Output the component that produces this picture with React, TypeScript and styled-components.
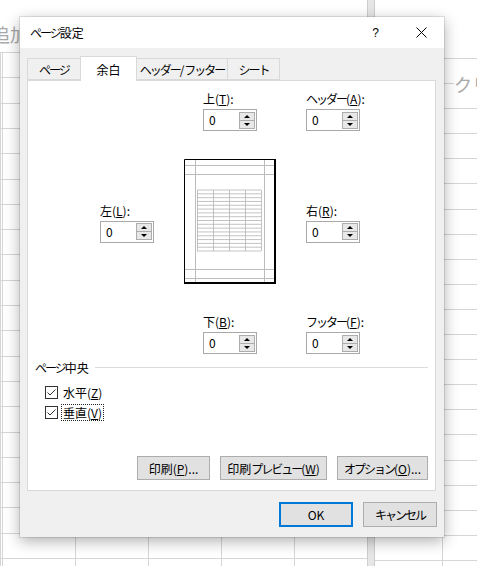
import React from "react";
import styled, { createGlobalStyle } from "styled-components";

const UI = `"Noto Sans CJK JP", "Noto Sans", "Liberation Sans", sans-serif`;

const GlobalStyle = createGlobalStyle`
  html, body { margin: 0; padding: 0; }
  body {
    width: 477px;
    height: 566px;
    overflow: hidden;
    font-family: ${UI};
    color: #000;
  }
`;

/* kana runs are set tighter, as the proportional UI font of the original does */
const Kana = styled.span`
  letter-spacing: -2px;
`;

const jp = (text: string) =>
  text.split(/([\u3040-\u30ff]+)/).map((part, i) =>
    /[\u3040-\u30ff]/.test(part) ? <Kana key={i}>{part}</Kana> : part
  );

/* ---------- background spreadsheet ---------- */

const Desktop = styled.div`
  position: relative;
  width: 477px;
  height: 566px;
  display: flex;
  background: #fff;
  overflow: hidden;
`;

const LeftPane = styled.div`
  width: 367px;
  flex: none;
  display: flex;
  flex-direction: column;
`;

const PaneHeader = styled.div<{ $h: number }>`
  height: ${(p) => p.$h}px;
  flex: none;
  overflow: hidden;
`;

const GhostText = styled.div<{ $top: number; $left: number }>`
  margin: ${(p) => p.$top}px 0 0 ${(p) => p.$left}px;
  font-size: 18px;
  line-height: 20px;
  color: #a8a8a8;
  white-space: nowrap;
  background: #fff;
  width: max-content;
  padding-right: 2px;
`;

const SheetGrid = styled.div<{ $rowH: number; $vertical: string }>`
  flex: 1;
  background-image: repeating-linear-gradient(
      to bottom,
      #d6d6d6 0 1px,
      transparent 1px ${(p) => p.$rowH}px
    ),
    ${(p) => p.$vertical};
`;

const SplitBar = styled.div`
  width: 6px;
  flex: none;
  background: #e6e6e6;
  border-left: 1px solid #cdcdcd;
  border-right: 1px solid #cdcdcd;
`;

const RightPane = styled.div`
  flex: 1;
  min-width: 0;
  display: flex;
  flex-direction: column;
`;

/* ---------- dialog window ---------- */

const Dialog = styled.div`
  position: absolute;
  left: 20px;
  top: 17px;
  width: 424px;
  height: 520px;
  background: #f0f0f0;
  box-shadow: 0 0 0 1px rgba(0, 0, 0, 0.1), 0 4px 14px rgba(0, 0, 0, 0.32);
  display: flex;
  flex-direction: column;
  font-size: 12px;
`;

const TitleBar = styled.div`
  height: 31px;
  flex: none;
  background: #fff;
  display: flex;
  align-items: center;
`;

const Title = styled.div`
  flex: 1;
  padding-left: 10px;
  font-size: 12px;
  line-height: 16px;
`;

const TitleButton = styled.div<{ $w: number }>`
  width: ${(p) => p.$w}px;
  height: 31px;
  display: flex;
  align-items: center;
  justify-content: center;
  font-size: 12px;
  font-family: "Liberation Sans", sans-serif;
`;

const Body = styled.div`
  flex: 1;
  display: flex;
  flex-direction: column;
  padding: 8px 8px 10px 7px;
`;

const TabStrip = styled.div`
  height: 24px;
  display: flex;
  align-items: flex-end;
  position: relative;
  z-index: 1;
`;

const Tab = styled.div<{ $w: number; $active?: boolean }>`
  box-sizing: border-box;
  width: ${(p) => p.$w}px;
  height: ${(p) => (p.$active ? 25 : 22)}px;
  margin-bottom: ${(p) => (p.$active ? -1 : 0)}px;
  border: 1px solid #d9d9d9;
  border-bottom: ${(p) => (p.$active ? "none" : "1px solid #d9d9d9")};
  background: ${(p) => (p.$active ? "#fff" : "#f0f0f0")};
  display: flex;
  align-items: center;
  justify-content: center;
  padding-top: ${(p) => (p.$active ? 0 : 1)}px;
  font-size: 12px;
  white-space: nowrap;
  & + & {
    margin-left: -1px;
  }
`;

const Panel = styled.div`
  box-sizing: border-box;
  height: 411px;
  flex: none;
  border: 1px solid #d9d9d9;
  background: #fff;
  display: flex;
  flex-direction: column;
`;

const MarginGrid = styled.div`
  display: grid;
  grid-template-columns: 54px 92px 54px;
  grid-template-rows: 41px 126px 41px;
  column-gap: 30px;
  row-gap: 28px;
  margin: 9px 0 0 72px;
`;

const Cell = styled.div<{ $col: number; $row: number; $center?: boolean }>`
  grid-column: ${(p) => p.$col};
  grid-row: ${(p) => p.$row};
  align-self: ${(p) => (p.$center ? "center" : "start")};
  justify-self: ${(p) => (p.$col === 2 ? "center" : "start")};
`;

const FieldLabel = styled.div`
  height: 18px;
  line-height: 18px;
  margin-bottom: 1px;
  font-size: 12px;
  white-space: nowrap;
`;

const SpinBox = styled.div`
  box-sizing: border-box;
  width: 54px;
  height: 22px;
  border: 1px solid #a9a9a9;
  background: #fff;
  display: flex;
  align-items: center;
  padding: 0 1px 0 5px;
`;

const SpinValue = styled.span`
  flex: 1;
  font-size: 12px;
  line-height: 16px;
`;

const SpinButtons = styled.div`
  box-sizing: border-box;
  width: 16px;
  height: 17px;
  border: 1px solid #adadad;
  background: #e8e8e8;
  display: flex;
  flex-direction: column;
`;

const SpinHalf = styled.div`
  flex: 1;
  display: flex;
  align-items: center;
  justify-content: center;
  & + & {
    border-top: 1px solid #adadad;
  }
`;

const Arrow = styled.span<{ $dir: "up" | "down" }>`
  width: 0;
  height: 0;
  border-left: 3px solid transparent;
  border-right: 3px solid transparent;
  ${(p) =>
    p.$dir === "up"
      ? "border-bottom: 3px solid #000;"
      : "border-top: 3px solid #000;"}
`;

const Group = styled.div`
  margin: 5px 7px 0 7px;
`;

const GroupHeader = styled.div`
  height: 16px;
  display: flex;
  align-items: center;
  gap: 6px;
`;

const GroupTitle = styled.span`
  font-size: 12px;
  white-space: nowrap;
`;

const GroupLine = styled.div`
  flex: 1;
  height: 1px;
  background: #dcdcdc;
`;

const CheckList = styled.div`
  margin: 7px 0 0 10px;
  display: flex;
  flex-direction: column;
`;

const CheckRow = styled.div`
  height: 20px;
  display: flex;
  align-items: center;
`;

const CheckBox = styled.div`
  box-sizing: border-box;
  width: 13px;
  height: 13px;
  border: 1px solid #333;
  background: #fff;
  display: flex;
  align-items: center;
  justify-content: center;
  margin-right: 3px;
`;

const CheckLabel = styled.span<{ $focused?: boolean }>`
  box-sizing: border-box;
  height: 17px;
  line-height: 15px;
  padding: 0 1px;
  font-size: 12px;
  border: 1px dotted ${(p) => (p.$focused ? "#222" : "transparent")};
  white-space: nowrap;
`;

const ButtonRow = styled.div`
  margin-top: auto;
  display: flex;
  justify-content: flex-end;
  gap: 10px;
  padding: 0 7px 10px 0;
`;

const Button = styled.div<{ $w: number; $default?: boolean }>`
  box-sizing: border-box;
  width: ${(p) => p.$w}px;
  height: ${(p) => (p.$default !== undefined ? 25 : 24)}px;
  border: ${(p) => (p.$default ? "2px solid #0078d7" : "1px solid #adadad")};
  background: #e1e1e1;
  display: flex;
  align-items: center;
  justify-content: center;
  font-size: 12px;
  white-space: nowrap;
`;

const Footer = styled.div`
  margin-top: 11px;
  display: flex;
  justify-content: flex-end;
  gap: 10px;
  margin-right: -1px;
`;

/* ---------- pieces ---------- */

const Spin = ({ value }: { value: string }) => (
  <SpinBox>
    <SpinValue>{value}</SpinValue>
    <SpinButtons>
      <SpinHalf>
        <Arrow $dir="up" />
      </SpinHalf>
      <SpinHalf>
        <Arrow $dir="down" />
      </SpinHalf>
    </SpinButtons>
  </SpinBox>
);

const Field = ({ label, keyChar }: { label: string; keyChar: string }) => (
  <>
    <FieldLabel>
      {jp(label)}(<u>{keyChar}</u>):
    </FieldLabel>
    <Spin value="0" />
  </>
);

const CheckMark = () => (
  <svg width="11" height="11" viewBox="0 0 11 11">
    <polyline
      points="1.5,5.5 4,8 9.5,2.5"
      fill="none"
      stroke="#333"
      strokeWidth="1"
    />
  </svg>
);

const CloseIcon = () => (
  <svg width="11" height="11" viewBox="0 0 11 11">
    <path d="M0.5 0.5 L10.5 10.5 M10.5 0.5 L0.5 10.5" stroke="#000" strokeWidth="1" />
  </svg>
);

const PagePreview = () => {
  const top = 31;
  const bottom = 92;
  const rowCount = 16;
  const rows = Array.from(
    { length: rowCount + 1 },
    (_, i) => top + (i * (bottom - top)) / rowCount
  );
  const cols = [13, 29, 45, 61, 77];
  return (
    <svg width="93" height="126" viewBox="0 0 93 126">
      <rect x="0" y="0" width="91" height="124" fill="#fff" />
      <g stroke="#bcbcbc" strokeWidth="1">
        <line x1="11.5" y1="1" x2="11.5" y2="123" />
        <line x1="80.5" y1="1" x2="80.5" y2="123" />
        <line x1="1" y1="6.5" x2="90" y2="6.5" />
        <line x1="1" y1="15.5" x2="90" y2="15.5" />
        <line x1="1" y1="110.5" x2="90" y2="110.5" />
        <line x1="1" y1="119.5" x2="90" y2="119.5" />
      </g>
      <g stroke="#b4b4b4" strokeWidth="0.8">
        {rows.map((y, i) => (
          <line key={"r" + i} x1="13" y1={y} x2="77" y2={y} />
        ))}
        {cols.map((x, i) => (
          <line key={"c" + i} x1={x + 0.5} y1={top} x2={x + 0.5} y2={bottom} />
        ))}
      </g>
      <path d="M0.5 124 V0.5 H91" stroke="#000" strokeWidth="1" fill="none" />
      <path d="M91 0 V124 H0" stroke="#000" strokeWidth="2" fill="none" />
    </svg>
  );
};

export default function App() {
  return (
    <>
      <GlobalStyle />
      <Desktop>
        <LeftPane>
          <PaneHeader $h={52}>
            <GhostText $top={24} $left={-8}>
              追加
            </GhostText>
          </PaneHeader>
          <SheetGrid
            $rowH={25.3}
            $vertical="repeating-linear-gradient(to right, #d6d6d6 0 1px, transparent 1px 73px)"
            style={{ backgroundPosition: "0 0, 2px 0" }}
          />
        </LeftPane>
        <SplitBar />
        <RightPane>
          <PaneHeader $h={58} />
          <SheetGrid
            $rowH={25.1}
            $vertical="linear-gradient(to right, transparent 67px, #d6d6d6 67px 68px, transparent 68px)"
          >
            <GhostText $top={16} $left={79}>
              クリ
            </GhostText>
          </SheetGrid>
        </RightPane>

        <Dialog>
          <TitleBar>
            <Title>{jp("ページ設定")}</Title>
            <TitleButton $w={45}>?</TitleButton>
            <TitleButton $w={46}>
              <CloseIcon />
            </TitleButton>
          </TitleBar>
          <Body>
            <TabStrip>
              <Tab $w={54}>{jp("ページ")}</Tab>
              <Tab $w={57} $active>
                余白
              </Tab>
              <Tab $w={92}>{jp("ヘッダー/フッター")}</Tab>
              <Tab $w={53}>{jp("シート")}</Tab>
            </TabStrip>
            <Panel>
              <MarginGrid>
                <Cell $col={2} $row={1}>
                  <Field label="上" keyChar="T" />
                </Cell>
                <Cell $col={3} $row={1}>
                  <Field label="ヘッダー" keyChar="A" />
                </Cell>
                <Cell $col={1} $row={2} $center>
                  <Field label="左" keyChar="L" />
                </Cell>
                <Cell $col={2} $row={2}>
                  <PagePreview />
                </Cell>
                <Cell $col={3} $row={2} $center>
                  <Field label="右" keyChar="R" />
                </Cell>
                <Cell $col={2} $row={3}>
                  <Field label="下" keyChar="B" />
                </Cell>
                <Cell $col={3} $row={3}>
                  <Field label="フッター" keyChar="F" />
                </Cell>
              </MarginGrid>

              <Group>
                <GroupHeader>
                  <GroupTitle>{jp("ページ中央")}</GroupTitle>
                  <GroupLine />
                </GroupHeader>
                <CheckList>
                  <CheckRow>
                    <CheckBox>
                      <CheckMark />
                    </CheckBox>
                    <CheckLabel>
                      水平(<u>Z</u>)
                    </CheckLabel>
                  </CheckRow>
                  <CheckRow>
                    <CheckBox>
                      <CheckMark />
                    </CheckBox>
                    <CheckLabel $focused>
                      垂直(<u>V</u>)
                    </CheckLabel>
                  </CheckRow>
                </CheckList>
              </Group>

              <ButtonRow>
                <Button $w={73}>
                  印刷(<u>P</u>)...
                </Button>
                <Button $w={107}>
                  {jp("印刷プレビュー")}(<u>W</u>)
                </Button>
                <Button $w={91}>
                  {jp("オプション")}(<u>O</u>)...
                </Button>
              </ButtonRow>
            </Panel>
            <Footer>
              <Button $w={74} $default>
                OK
              </Button>
              <Button $w={74} $default={false}>
                {jp("キャンセル")}
              </Button>
            </Footer>
          </Body>
        </Dialog>
      </Desktop>
    </>
  );
}
